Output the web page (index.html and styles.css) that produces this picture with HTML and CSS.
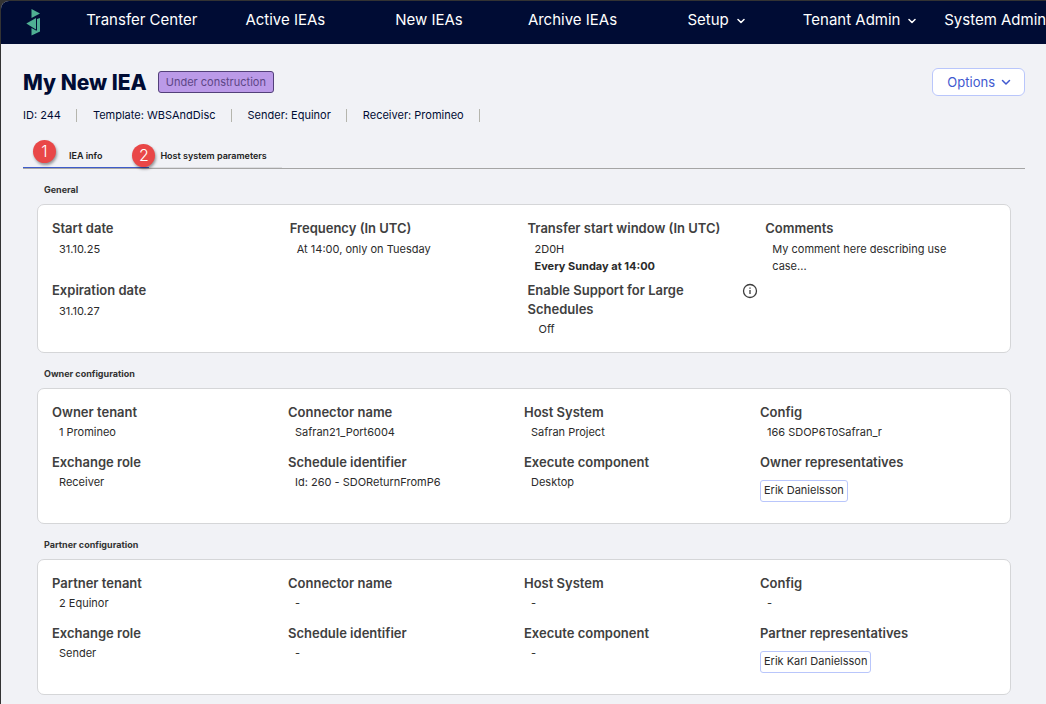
FILE: index.html
```html
<!DOCTYPE html>
<html lang="en">
<head>
  <meta charset="UTF-8">
  <meta name="viewport" content="width=device-width, initial-scale=1.0">
  <title>My New IEA</title>
  <link rel="stylesheet" href="styles.css">
</head>
<body>
  <div class="app">
    <header class="topbar">
      <a class="logo" href="#" aria-label="Home">
        <svg width="16" height="28" viewBox="0 0 16 28" fill="#4fb093">
          <path d="M5.500 1 L14 5.500 L5.500 10 Z"/>
          <path d="M0.300 15.500 L10 10 V21.500 Z"/>
          <path d="M11 11 L14 10 V23.500 L5.500 27.500 V20 L10 22.500 H11 Z"/>
        </svg>
      </a>
      <nav class="nav">
        <a href="#">Transfer Center</a>
        <a href="#">Active IEAs</a>
        <a href="#">New IEAs</a>
        <a href="#">Archive IEAs</a>
        <a href="#">Setup <svg class="chevron" width="8" height="6" viewBox="0 0 8 6"><path d="M1 1.500l3 3 3-3"/></svg></a>
        <a href="#">Tenant Admin <svg class="chevron" width="8" height="6" viewBox="0 0 8 6"><path d="M1 1.500l3 3 3-3"/></svg></a>
        <a href="#">System Admin <svg class="chevron" width="8" height="6" viewBox="0 0 8 6"><path d="M1 1.500l3 3 3-3"/></svg></a>
      </nav>
    </header>

    <main>
      <div class="title-row">
        <h1>My New IEA</h1>
        <span class="status">Under construction</span>
        <button type="button" class="options">Options <svg class="chevron" width="10" height="7" viewBox="0 0 10 7"><path d="M1.500 1.500l3.500 3.500 3.500-3.500"/></svg></button>
      </div>
      <ul class="meta">
        <li>ID: 244</li>
        <li>Template: WBSAndDisc</li>
        <li>Sender: Equinor</li>
        <li>Receiver: Promineo</li>
      </ul>

      <div class="tabs" role="tablist">
        <button type="button" role="tab" aria-selected="true" class="tab active">IEA info<span class="step step-one">1</span></button>
        <button type="button" role="tab" aria-selected="false" class="tab">Host system parameters<span class="step step-two">2</span></button>
      </div>

      <section>
        <h2>General</h2>
        <dl class="card general">
          <div><dt>Start date</dt><dd>31.10.25</dd></div>
          <div><dt>Frequency (In UTC)</dt><dd>At 14:00, only on Tuesday</dd></div>
          <div><dt>Transfer start window (In UTC)</dt><dd>2D0H</dd><dd><b>Every Sunday at 14:00</b></dd></div>
          <div class="comments"><dt>Comments</dt><dd>My comment here describing use case...</dd></div>
          <div class="expiration"><dt>Expiration date</dt><dd>31.10.27</dd></div>
          <div class="large">
            <dt>
              <span>Enable Support for Large Schedules</span>
              <svg width="16" height="16" viewBox="0 0 16 16" fill="none" stroke="#3c3c3c"><circle cx="8" cy="8" r="6.500" stroke-width="1.300"/><path d="M8 7v4M8 4.500v1.300" stroke-width="1.300"/></svg>
            </dt>
            <dd>Off</dd>
          </div>
        </dl>
      </section>

      <section>
        <h2>Owner configuration</h2>
        <dl class="card config">
          <div><dt>Owner tenant</dt><dd>1 Promineo</dd></div>
          <div><dt>Connector name</dt><dd>Safran21_Port6004</dd></div>
          <div><dt>Host System</dt><dd>Safran Project</dd></div>
          <div><dt>Config</dt><dd>166 SDOP6ToSafran_r</dd></div>
          <div><dt>Exchange role</dt><dd>Receiver</dd></div>
          <div><dt>Schedule identifier</dt><dd>Id: 260 - SDOReturnFromP6</dd></div>
          <div><dt>Execute component</dt><dd>Desktop</dd></div>
          <div><dt>Owner representatives</dt><dd class="people"><span class="chip">Erik Danielsson</span></dd></div>
        </dl>
      </section>

      <section>
        <h2>Partner configuration</h2>
        <dl class="card config">
          <div><dt>Partner tenant</dt><dd>2 Equinor</dd></div>
          <div><dt>Connector name</dt><dd>-</dd></div>
          <div><dt>Host System</dt><dd>-</dd></div>
          <div><dt>Config</dt><dd>-</dd></div>
          <div><dt>Exchange role</dt><dd>Sender</dd></div>
          <div><dt>Schedule identifier</dt><dd>-</dd></div>
          <div><dt>Execute component</dt><dd>-</dd></div>
          <div><dt>Partner representatives</dt><dd class="people"><span class="chip">Erik Karl Danielsson</span></dd></div>
        </dl>
      </section>
    </main>
  </div>
</body>
</html>
```
FILE: styles.css
```css
* { box-sizing: border-box; }
body { margin: 0; background: #333; font-family: Inter, "Liberation Sans", sans-serif; font-size: 11px; line-height: 17px; color: #2b2b2b; }
h1, h2, ul, dl, dd { margin: 0; padding: 0; }
button { font-family: inherit; cursor: pointer; }
.app { margin: 1px 0 0 1px; min-height: calc(100vh - 1px); background: #f1f2f6; border-top-left-radius: 8px; overflow: hidden; }

.topbar { display: flex; height: 43px; background: #000c34; overflow: hidden; }
.logo { flex: 0 0 69px; padding: 7px 0 0 25px; }
.nav { flex: 0 0 1005px; display: grid; grid-template-columns: repeat(7, 1fr); }
.nav a { display: flex; align-items: center; justify-content: center; gap: 8px; padding-bottom: 6px; color: #fff; font-size: 15px; text-decoration: none; white-space: nowrap; }
.nav .chevron { margin-top: 3px; }
.chevron { fill: none; stroke: currentColor; stroke-width: 1.5; stroke-linecap: round; stroke-linejoin: round; }

main { padding: 24px 21px 9px 22px; }
.title-row { display: flex; align-items: center; height: 28px; }
h1 { padding-top: 2px; font-size: 21px; line-height: 28px; font-weight: 800; color: #000c34; }
.status { margin-left: 11px; height: 22px; line-height: 20px; padding: 0 7px; border: 1px solid #53407a; border-radius: 3px; background: #bb9ae8; color: #5d4686; }
.options { display: flex; align-items: center; gap: 6px; margin-left: auto; height: 28px; padding: 0 13px 0 14px; border: 1px solid #b9c6fb; border-radius: 6px; background: #fff; color: #4159cf; font-size: 13px; }
.meta { display: flex; list-style: none; margin-top: 11px; color: #000c34; }
.meta li { display: flex; align-items: center; }
.meta li::after { content: ""; width: 1px; height: 13px; margin: 0 16px 0 15px; background: #b5b5ad; }

.tabs { display: flex; margin-top: 18px; height: 27px; border-bottom: 1px solid #a5a5a5; }
.tab { position: relative; height: 26px; padding: 2px 15px 0 11px; border: 0; border-bottom: 1px solid #dcdde0; background: none; color: #222; font-size: 9px; font-weight: 600; }
.tab.active { padding: 2px 47px 0 46px; border-bottom-color: #3e5ccb; }
.step { position: absolute; width: 23px; height: 23px; border-radius: 50%; background: #e94747; color: #fff; font-size: 16px; line-height: 23px; font-weight: 300; text-align: center; box-shadow: 1px 2px 3px rgba(0, 0, 0, 0.4); }
.step-one { left: 10px; top: -2px; }
.step-two { left: -17px; top: 2px; }

section { padding: 0 14px; margin-top: 13px; }
h2 { margin: 0 7px 6px; font-size: 9px; line-height: 16px; font-weight: 700; color: #333; }
.card { display: grid; grid-template-columns: repeat(4, 1fr); padding: 14px; background: #fff; border: 1px solid #d5d6d8; border-radius: 7px; }
.general { gap: 6px 7px; }
.config { row-gap: 12px; padding-bottom: 21px; }
dt { margin-bottom: 2px; font-size: 13px; line-height: 19px; font-weight: 600; color: #404040; }
dd { padding-left: 7px; }
.general dt { margin-bottom: 3px; }
.comments dd { padding-right: 40px; }
.expiration { grid-column: 1; }
.large { grid-column: 3; }
.general .large dt { display: flex; justify-content: space-between; margin-bottom: 2px; }
.large dt span { max-width: 180px; }
.large dt svg { flex: none; margin-top: 2px; }
.large dd { padding-left: 11px; }
.people { display: flex; padding: 6px 0 0; }
.chip { height: 22px; line-height: 18px; padding: 0 3px; border: 1px solid #b9c6fb; border-radius: 3px; }
```
